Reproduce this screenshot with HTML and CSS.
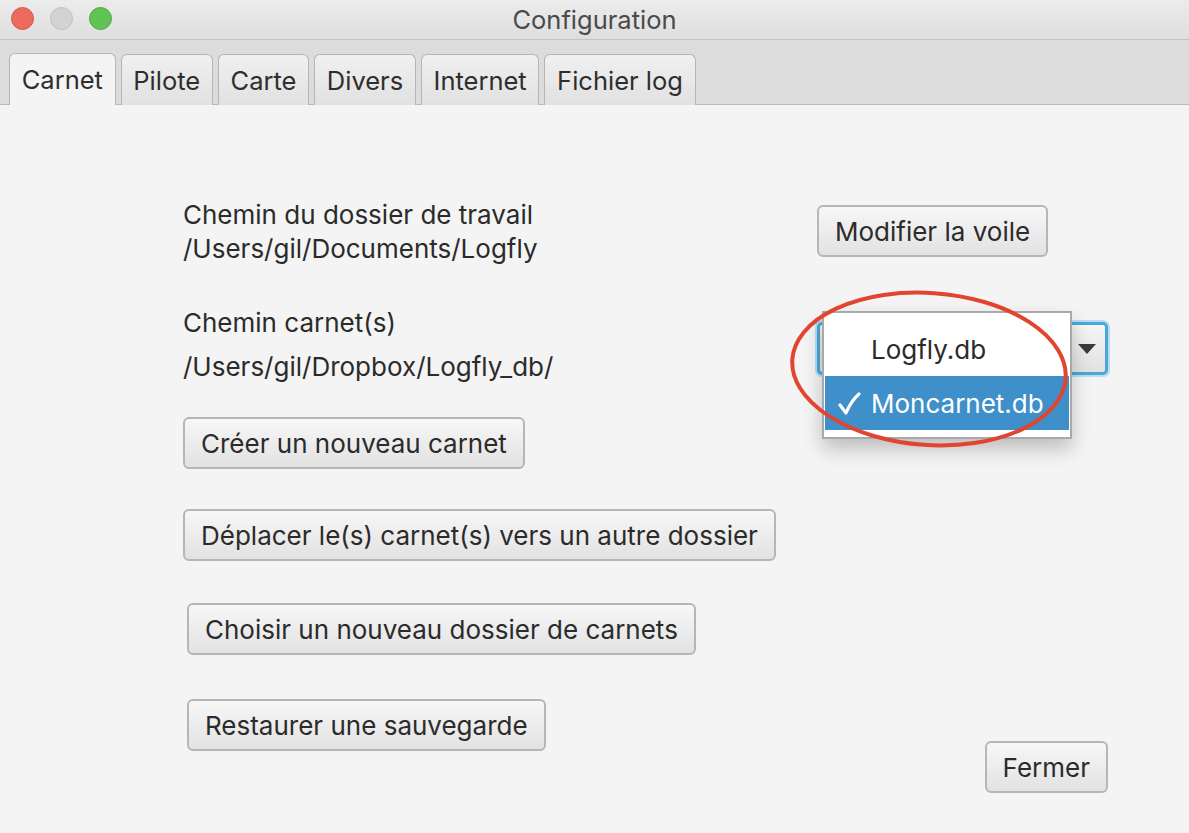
FILE: index.html
```html
<!DOCTYPE html>
<html lang="fr">
<head>
<meta charset="utf-8">
<title>Configuration</title>
<link rel="stylesheet" href="styles.css">
</head>
<body>
<div class="window">
  <div class="titlebar">
    <div class="lights">
      <span class="light red"></span>
      <span class="light grey"></span>
      <span class="light green"></span>
    </div>
    <div class="title">Configuration</div>
  </div>
  <div class="tabbar">
    <div class="tab active">Carnet</div>
    <div class="tab">Pilote</div>
    <div class="tab">Carte</div>
    <div class="tab">Divers</div>
    <div class="tab">Internet</div>
    <div class="tab">Fichier log</div>
  </div>
  <div class="content">
    <div class="left">
      <div class="label-group">
        <div class="line">Chemin du dossier de travail</div>
        <div class="line">/Users/gil/Documents/Logfly</div>
      </div>
      <div class="line l-carnet">Chemin carnet(s)</div>
      <div class="line l-path">/Users/gil/Dropbox/Logfly_db/</div>
      <button class="btn b-creer">Créer un nouveau carnet</button>
      <button class="btn b-deplacer">Déplacer le(s) carnet(s) vers un autre dossier</button>
      <button class="btn b-choisir shift">Choisir un nouveau dossier de carnets</button>
      <button class="btn b-restaurer shift">Restaurer une sauvegarde</button>
    </div>
    <div class="right">
      <button class="btn b-voile">Modifier la voile</button>
      <div class="combo">
        <div class="combo-value"></div>
        <div class="combo-arrow"><span class="tri"></span></div>
        <div class="popup">
          <div class="item">Logfly.db</div>
          <div class="item selected">
            <svg class="check" width="24" height="24" viewBox="0 0 24 24"><path d="M3 13 L9 21 Q14 9 22 2" fill="none" stroke="#ffffff" stroke-width="3.2" stroke-linecap="round" stroke-linejoin="round"/></svg>
            Moncarnet.db
          </div>
        </div>
        <svg class="ring" width="300" height="170" viewBox="0 0 300 170">
          <ellipse cx="150" cy="85" rx="137" ry="76" fill="none" stroke="#e2452f" stroke-width="4" transform="rotate(4 150 85)"/>
        </svg>
      </div>
      <button class="btn b-fermer">Fermer</button>
    </div>
  </div>
</div>
</body>
</html>
```
FILE: styles.css
```css
html, body {
  margin: 0;
  padding: 0;
}
body {
  width: 1189px;
  height: 833px;
  overflow: hidden;
  background: #f4f4f4;
  font-family: "Inter", "Noto Sans", "Liberation Sans", sans-serif;
  color: #2b2b2b;
}
.window {
  display: flex;
  flex-direction: column;
  height: 833px;
}
.titlebar {
  height: 39px;
  border-bottom: 1px solid #c4c4c4;
  background: linear-gradient(#ececec, #dedede);
  position: relative;
  display: flex;
  align-items: center;
  justify-content: center;
}
.lights {
  position: absolute;
  left: 11px;
  top: 7px;
  display: flex;
  gap: 16px;
}
.light {
  width: 23px;
  height: 23px;
  border-radius: 50%;
  box-sizing: border-box;
  display: block;
}
.red { background: #ee6a5e; border: 1px solid #d7574c; }
.grey { background: #d3d3d3; border: 1px solid #c0c0c0; }
.green { background: #5fc453; border: 1px solid #4ea944; }
.title {
  font-size: 25.5px;
  color: #4a4a4a;
}
.tabbar {
  height: 64px;
  background: #dcdcdc;
  border-bottom: 1px solid #b9b9b9;
  display: flex;
  align-items: flex-end;
  padding-left: 9px;
  gap: 5px;
}
.tab {
  height: 50px;
  margin-bottom: -1px;
  padding: 0 11.7px;
  border: 1px solid #b5b5b5;
  border-bottom: none;
  border-radius: 6px 6px 0 0;
  background: linear-gradient(#f0f0f0, #e1e1e1);
  font-size: 25.5px;
  display: flex;
  align-items: center;
  justify-content: center;
  color: #2e2e2e;
}
.tab.active {
  background: #f4f4f4;
  height: 51px;
  position: relative;
  z-index: 1;
}
.content {
  flex: 1;
  display: grid;
  grid-template-columns: 634px 291px;
  padding-left: 183px;
  position: relative;
}
.left {
  display: flex;
  flex-direction: column;
  align-items: flex-start;
  padding-top: 93px;
}
.line {
  font-size: 26px;
  line-height: 34px;
  white-space: nowrap;
}
.l-carnet { margin-top: 40px; }
.l-path { margin-top: 10px; }
.btn {
  font-family: inherit;
  font-size: 26px;
  color: #2b2b2b;
  height: 52px;
  padding: 0 16px;
  border: 2px solid #b6b6b6;
  border-radius: 6px;
  background: linear-gradient(#f7f7f7, #e2e2e2);
  box-sizing: border-box;
  white-space: nowrap;
}
.b-creer { margin-top: 33px; }
.b-deplacer { margin-top: 40px; }
.b-choisir { margin-top: 42px; }
.b-restaurer { margin-top: 44px; }
.shift { margin-left: 4px; }
.right {
  display: flex;
  flex-direction: column;
  align-items: flex-start;
  padding-top: 100px;
}
.combo {
  margin-top: 65px;
  width: 291px;
  height: 53px;
  box-sizing: border-box;
  border: 3px solid #4aa7d8;
  box-shadow: 0 0 0 2px #b4dff2;
  border-radius: 5px;
  background: linear-gradient(#f5f5f5, #e2e2e2);
  position: relative;
  display: flex;
}
.combo-value { flex: 1; }
.combo-arrow {
  width: 36px;
  display: flex;
  align-items: center;
  justify-content: center;
}
.tri {
  width: 0;
  height: 0;
  border-left: 9px solid transparent;
  border-right: 9px solid transparent;
  border-top: 10px solid #3a3a3a;
}
.popup {
  position: absolute;
  left: 2px;
  top: -14px;
  width: 250px;
  height: 128px;
  box-sizing: border-box;
  background: #ffffff;
  border: 2px solid #a9a9a9;
  padding: 9px 1px 0 1px;
  box-shadow: 0 10px 18px rgba(0, 0, 0, 0.22);
  z-index: 2;
}
.item {
  height: 54px;
  display: flex;
  align-items: center;
  padding-left: 46px;
  font-size: 26px;
  color: #2b2b2b;
  position: relative;
}
.item.selected {
  background: #3e8fca;
  color: #ffffff;
}
.check {
  position: absolute;
  left: 12px;
  top: 16px;
}
.ring {
  position: absolute;
  left: -41px;
  top: -41px;
  z-index: 3;
  pointer-events: none;
  overflow: visible;
}
.b-fermer {
  margin-top: auto;
  margin-bottom: 40px;
  align-self: flex-end;
}
```
